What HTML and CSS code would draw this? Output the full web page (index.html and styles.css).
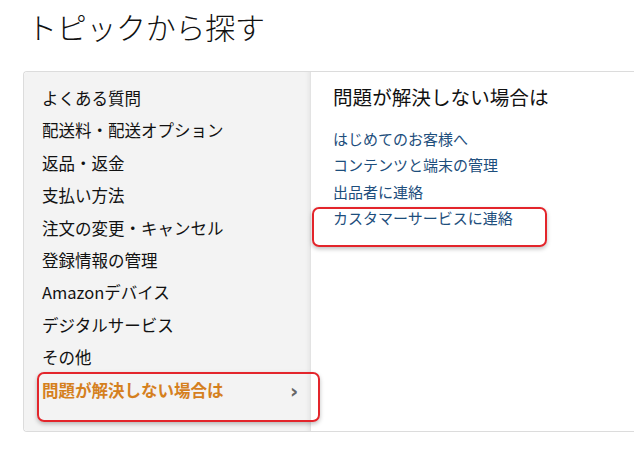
FILE: index.html
```html
<!DOCTYPE html>
<html lang="ja">
<head>
  <meta charset="UTF-8">
  <title>トピックから探す</title>
  <link rel="stylesheet" href="styles.css">
</head>
<body>
  <h1 class="title">トピックから探す</h1>
  <div class="panel">
    <ul class="topics">
      <li>よくある質問</li>
      <li>配送料・配送オプション</li>
      <li>返品・返金</li>
      <li>支払い方法</li>
      <li>注文の変更・キャンセル</li>
      <li>登録情報の管理</li>
      <li>Amazonデバイス</li>
      <li>デジタルサービス</li>
      <li>その他</li>
      <li class="active">問題が解決しない場合は<span class="chev">›</span><span class="mark mark-left"></span></li>
    </ul>
    <div class="detail">
      <h2>問題が解決しない場合は</h2>
      <ul class="links">
        <li><a href="#">はじめてのお客様へ</a></li>
        <li><a href="#">コンテンツと端末の管理</a></li>
        <li><a href="#">出品者に連絡</a></li>
        <li class="marked"><a href="#">カスタマーサービスに連絡</a><span class="mark mark-right"></span></li>
      </ul>
    </div>
  </div>
</body>
</html>
```

FILE: styles.css
```css
body {
  margin: 0;
  padding: 0;
  background: #fff;
  font-family: "Noto Sans CJK JP", "Noto Sans", sans-serif;
  color: #111;
  overflow: hidden;
}

.title {
  margin: 0;
  padding: 6px 0 0 27px;
  height: 65px;
  font-size: 30px;
  font-weight: 300;
  line-height: 40px;
  letter-spacing: -0.3px;
}

.panel {
  display: flex;
  margin-left: 23px;
  width: 640px;
  height: 361px;
  border: 1px solid #dcdcdc;
  border-right: none;
  border-radius: 4px 0 0 4px;
  box-sizing: border-box;
}

.topics {
  list-style: none;
  margin: 0;
  padding: 10px 0 0 18px;
  width: 268px;
  background: #f3f3f3;
  box-shadow: inset -5px 0 5px -4px rgba(0,0,0,0.07);
  border-radius: 4px 0 0 4px;
}

.topics li {
  position: relative;
  height: 32.4px;
  line-height: 32.4px;
  font-size: 16.5px;
  color: #111;
  white-space: nowrap;
}

.topics li.active {
  color: #d5801e;
  font-weight: bold;
}

.chev {
  position: absolute;
  left: 248px;
  top: 1px;
  font-size: 20px;
  font-weight: bold;
  color: #666;
  font-family: "DejaVu Sans", sans-serif;
}

.detail {
  flex: 1;
  border-left: 1px solid #e3e3e3;
  padding: 12px 0 0 22px;
}

.detail h2 {
  margin: 0 0 16px;
  font-size: 19.6px;
  font-weight: normal;
  line-height: 26px;
  color: #111;
}

.links {
  list-style: none;
  margin: 0;
  padding: 0;
}

.links li {
  position: relative;
  height: 26.4px;
  line-height: 26.4px;
  font-size: 15px;
}

.links a {
  color: #1d4e7c;
  text-decoration: none;
}

.mark {
  position: absolute;
  border: 2px solid #e3252b;
  border-radius: 7px;
  box-shadow: 0 2px 4px rgba(0,0,0,0.25);
  pointer-events: none;
}

.mark-left {
  left: -5px;
  top: -2px;
  width: 279px;
  height: 46px;
}

.mark-right {
  left: -21px;
  top: 2px;
  width: 231px;
  height: 36px;
}
```
